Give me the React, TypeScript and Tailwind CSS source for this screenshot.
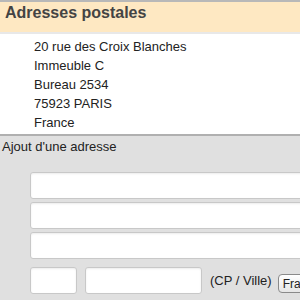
export default function App() {
  const lines = ["20 rue des Croix Blanches", "Immeuble C", "Bureau 2534", "75923 PARIS", "France"];
  const input = "h-[27px] bg-white border border-[#c8c8c8] rounded-[3px] shadow-[inset_0_1px_2px_rgba(0,0,0,0.08)]";
  return (
    <div className="w-[300px] h-[300px] overflow-hidden bg-[#e0e0e0] text-[#222]" style={{ fontFamily: '"Liberation Sans", Arial, sans-serif' }}>
      <div className="border-t-2 border-[#b8b8b8] bg-[#fee8c2] h-[32px] pl-[5px] pt-[2px]">
        <div className="text-[16px] leading-[18px] font-bold text-[#444] whitespace-nowrap">Adresses postales</div>
      </div>
      <div className="border-t-2 border-[#e8e8e8] bg-white pl-[34px] pt-[3px] h-[104px] border-b-2 border-b-[#b0b0b0]">
        {lines.map((l) => (
          <div key={l} className="text-[13px] leading-[19px] whitespace-nowrap">{l}</div>
        ))}
      </div>
      <div className="pl-[2px] pt-[3px] text-[13px] leading-[16px] whitespace-nowrap">Ajout d'une adresse</div>
      <div className="pl-[30px] pt-[17px] flex flex-col gap-[3px]">
        <div className={`${input} w-[300px]`} />
        <div className={`${input} w-[300px]`} />
        <div className={`${input} w-[300px]`} />
        <div className="flex items-center mt-[5px] whitespace-nowrap">
          <div className={`${input} w-[47px] shrink-0`} />
          <div className={`${input} ml-[8px] w-[117px] shrink-0`} />
          <span className="ml-[8px] text-[13px] shrink-0">(CP / Ville)</span>
          <div className="ml-[6px] self-end mb-[1px] shrink-0 h-[19px] px-[4px] flex items-center text-[12px] border border-[#8a8a8a] rounded-[4px] bg-gradient-to-b from-white to-[#e6e6e6]">France</div>
        </div>
      </div>
    </div>
  );
}
